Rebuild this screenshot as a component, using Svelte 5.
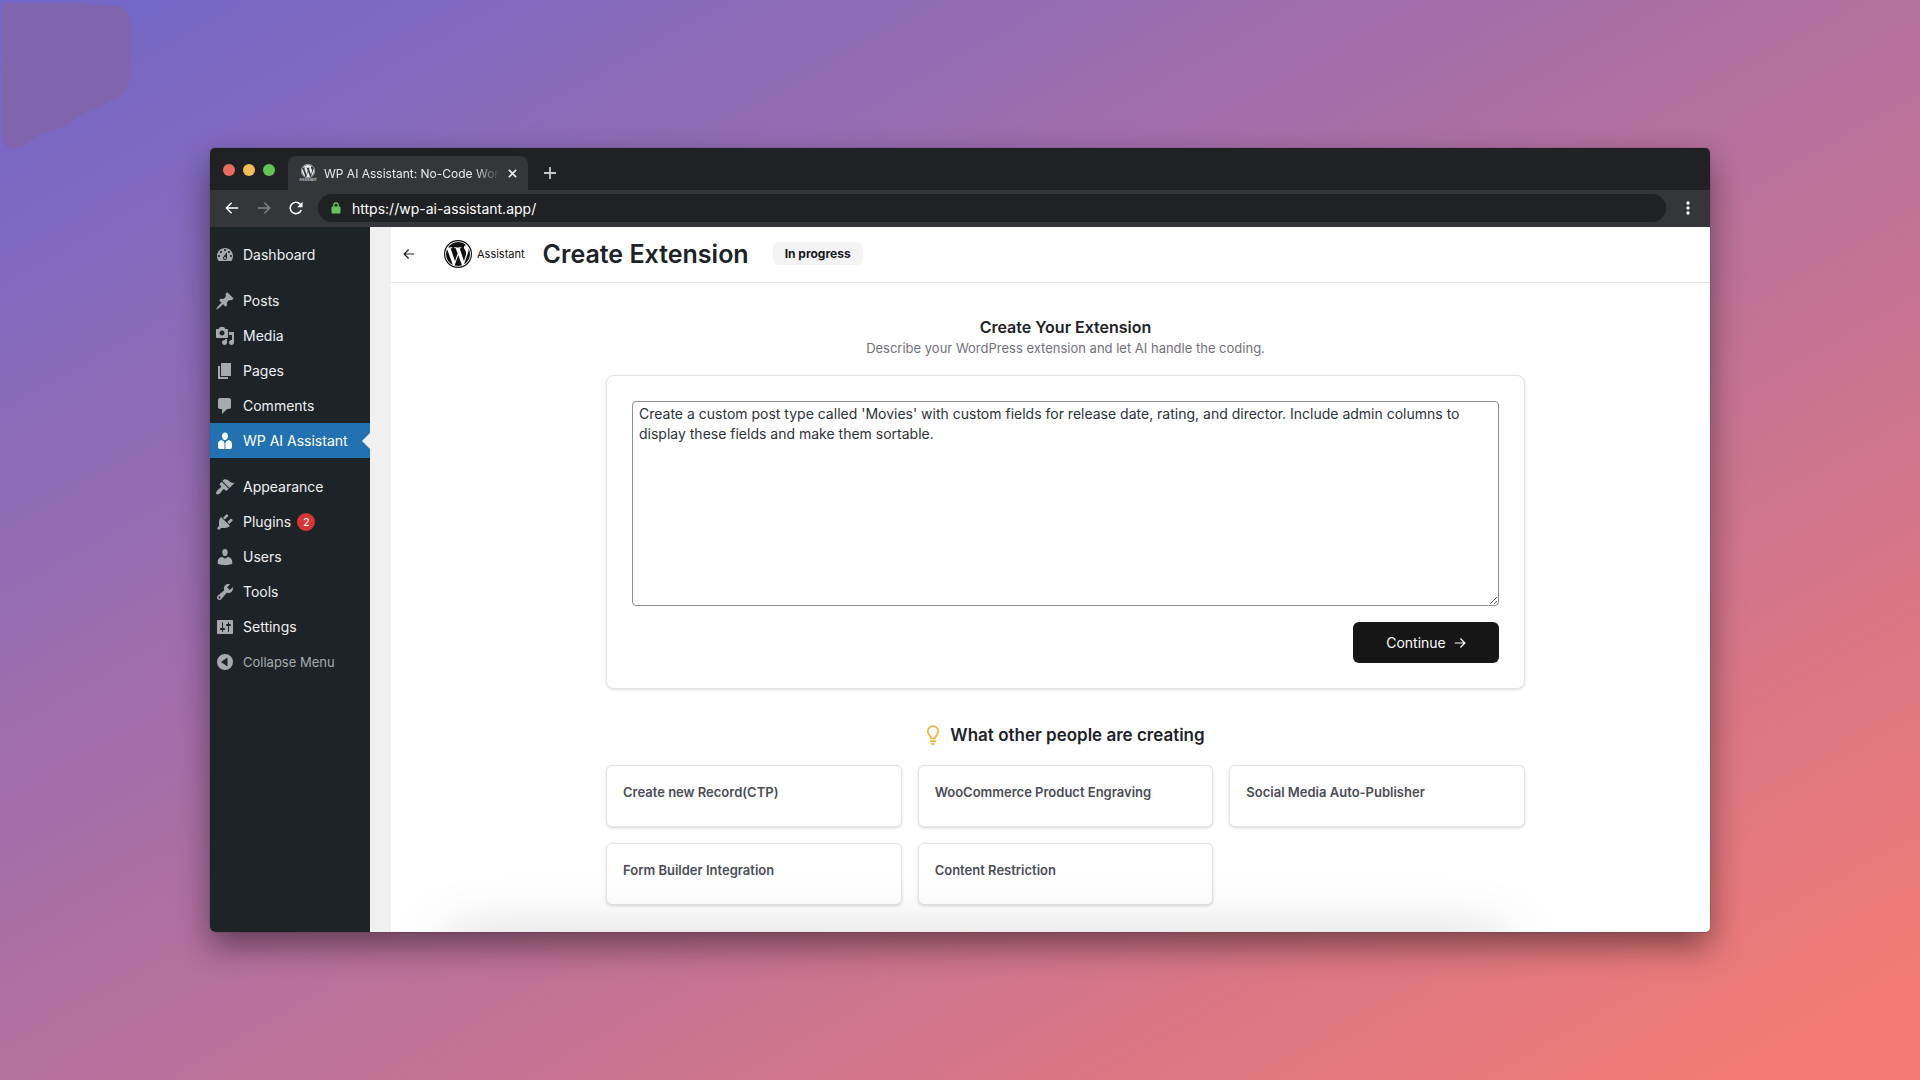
<script lang="ts">
    type MenuItem = { name: string; icon: string; active?: boolean; gap?: boolean; badge?: number };

    const menu: MenuItem[] = [
        { name: 'Dashboard', icon: 'M3.76 16h12.48c1.1-1.37 1.76-3.11 1.76-5 0-4.42-3.58-8-8-8s-8 3.58-8 8c0 1.89.66 3.63 1.76 5zM10 4c.55 0 1 .45 1 1s-.45 1-1 1-1-.45-1-1 .45-1 1-1zM6 6c.55 0 1 .45 1 1s-.45 1-1 1-1-.45-1-1 .45-1 1-1zm8 0c.55 0 1 .45 1 1s-.45 1-1 1-1-.45-1-1 .45-1 1-1zm-5.37 5.55L12 7v6c0 1.1-.9 2-2 2s-2-.9-2-2c0-.57.24-1.08.63-1.45zM4 10c.55 0 1 .45 1 1s-.45 1-1 1-1-.45-1-1 .45-1 1-1zm12 0c.55 0 1 .45 1 1s-.45 1-1 1-1-.45-1-1 .45-1 1-1zm-5 3c0-.55-.45-1-1-1s-1 .45-1 1 .45 1 1 1 1-.45 1-1z' },
        { name: 'Posts', gap: true, icon: 'M10.44 3.02l1.82-1.82 6.36 6.35-1.83 1.82c-1.05-.68-2.48-.57-3.41.36l-.75.75c-.92.93-1.04 2.35-.35 3.41l-1.83 1.82-2.41-2.41-2.8 2.79c-.42.42-3.38 2.71-3.8 2.29s1.86-3.39 2.28-3.81l2.79-2.79L4.1 9.36l1.83-1.82c1.05.69 2.48.57 3.4-.36l.75-.75c.93-.92 1.05-2.35.36-3.41z' },
        { name: 'Media', icon: 'M13 11V4c0-.55-.45-1-1-1h-1.67L9 1H5L3.67 3H2c-.55 0-1 .45-1 1v7c0 .55.45 1 1 1h10c.55 0 1-.45 1-1zM7 4.5c1.38 0 2.5 1.12 2.5 2.5S8.38 9.5 7 9.5 4.5 8.38 4.5 7 5.62 4.5 7 4.5zM14 6h5v10.5c0 1.38-1.12 2.5-2.5 2.5S14 17.88 14 16.5s1.12-2.5 2.5-2.5c.17 0 .34.02.5.05V9h-3V6zm-4 8.05V13h2v3.5c0 1.38-1.12 2.5-2.5 2.5S7 17.88 7 16.5 8.12 14 9.5 14c.17 0 .34.02.5.05z' },
        { name: 'Pages', icon: 'M6 15V2h10v13H6zm-1 1h8v2H3V5h2v11z' },
        { name: 'Comments', icon: 'M5 2h9c1.1 0 2 .9 2 2v7c0 1.1-.9 2-2 2h-2l-5 5v-5H5c-1.1 0-2-.9-2-2V4c0-1.1.9-2 2-2z' },
        { name: 'WP AI Assistant', active: true, icon: 'M10 1.5c2 0 3 1.6 3 3.6s-1.2 4-3 4-3-2-3-4 1-3.600 3-3.600zM6.500 9L9 10.500l.6 2L9 18H5q-2 0-2-2v-3c0-2.200 1.500-3.800 3.500-4zM13.500 9c2 .2 3.500 1.800 3.500 4v3q0 2-2 2h-4l-.6-5.500.6-2zM10 13l.5 5h-1z' },
        { name: 'Appearance', gap: true, icon: 'M14.48 11.06L7.41 3.99l1.5-1.5c.5-.56 2.3-.47 3.51.32 1.21.8 1.43 1.28 2.91 2.1 1.18.64 2.45 1.26 4.45.85zm-.71.71L6.7 4.7 4.93 6.47c-.39.39-.39 1.02 0 1.41l1.06 1.06c.39.39.39 1.03 0 1.42-.6.6-1.43 1.11-2.21 1.69-.35.26-.7.53-1.01.84C1.43 14.23.4 16.08 1.4 17.07c.99 1 2.84-.03 4.18-1.36.31-.31.58-.66.85-1.02.57-.78 1.08-1.61 1.69-2.21.39-.39 1.02-.39 1.41 0l1.06 1.06c.39.39 1.02.39 1.41 0z' },
        { name: 'Plugins', badge: 2, icon: 'M13.11 4.36L9.87 7.6 8 5.73l3.24-3.24c.35-.34 1.05-.2 1.56.32.52.51.66 1.21.31 1.55zm-8 1.77l.91-1.12 9.01 9.01-1.19.84c-.71.71-2.63 1.16-3.82 1.16H6.14L4.9 17.26c-.59.59-1.54.59-2.12 0-.59-.58-.59-1.53 0-2.12l1.24-1.24v-3.88c0-1.13.4-3.19 1.09-3.89zm7.26 3.97l3.24-3.24c.34-.35 1.04-.21 1.55.31.52.51.66 1.21.31 1.55l-3.24 3.25z' },
        { name: 'Users', icon: 'M10 9.25c-2.27 0-2.73-3.44-2.73-3.44C7 4.02 7.82 2 9.97 2c2.16 0 2.98 2.02 2.71 3.81 0 0-.41 3.44-2.68 3.44zm0 2.57L12.72 10c2.39 0 4.52 2.33 4.52 4.53v2.49s-3.65 1.13-7.24 1.13c-3.65 0-7.24-1.13-7.24-1.13v-2.49c0-2.25 1.94-4.48 4.47-4.48z' },
        { name: 'Tools', icon: 'M16.68 9.77c-1.34 1.34-3.3 1.67-4.95.99l-5.41 6.52c-.99.99-2.59.99-3.58 0s-.99-2.59 0-3.57l6.52-5.42c-.68-1.65-.35-3.61.99-4.95 1.28-1.28 3.12-1.62 4.72-1.06l-2.89 2.89 2.82 2.82 2.86-2.87c.53 1.58.18 3.39-1.08 4.65zM3.81 16.21c.4.39 1.04.39 1.43 0 .4-.4.4-1.04 0-1.43-.39-.4-1.03-.4-1.43 0-.39.39-.39 1.03 0 1.43z' },
        { name: 'Settings', icon: 'M18 16V4c0-.55-.45-1-1-1H3c-.55 0-1 .45-1 1v12c0 .55.45 1 1 1h14c.55 0 1-.45 1-1zM8 11h1c.55 0 1 .45 1 1s-.45 1-1 1H8v1.5c0 .28-.22.5-.5.5s-.5-.22-.5-.5V13H6c-.55 0-1-.45-1-1s.45-1 1-1h1V5.5c0-.28.22-.5.5-.5s.5.22.5.5V11zm5-2h-1c-.55 0-1-.45-1-1s.45-1 1-1h1V5.5c0-.28.22-.5.5-.5s.5.22.5.5V7h1c.55 0 1 .45 1 1s-.45 1-1 1h-1v5.5c0 .28-.22.5-.5.5s-.5-.22-.5-.5V9z' }
    ];

    const ideas = [
        'Create new Record(CTP)',
        'WooCommerce Product Engraving',
        'Social Media Auto-Publisher',
        'Form Builder Integration',
        'Content Restriction'
    ];

    let url = 'https://wp-ai-assistant.app/';
    let prompt = "Create a custom post type called 'Movies' with custom fields for release date, rating, and director. Include admin columns to display these fields and make them sortable.";
</script>

{#snippet wpLogo()}
    <svg class="wp" viewBox="0 0 24 24" aria-hidden="true">
        <circle cx="12" cy="12" r="11.5" fill="none" stroke="currentColor" />
        <path transform="translate(.6 .6) scale(.95)" fill="currentColor" d="M21.469 6.825c.84 1.537 1.318 3.3 1.318 5.175 0 3.979-2.156 7.456-5.363 9.325l3.295-9.527c.615-1.54.82-2.771.82-3.864 0-.405-.026-.78-.07-1.11m-7.981.105c.647-.03 1.232-.105 1.232-.105.582-.075.514-.93-.067-.899 0 0-1.755.135-2.88.135-1.064 0-2.85-.15-2.85-.15-.585-.03-.661.855-.075.885 0 0 .54.061 1.125.09l1.68 4.605-2.37 7.08L5.354 6.9c.649-.03 1.234-.1 1.234-.1.585-.075.516-.93-.065-.896 0 0-1.746.138-2.874.138-.2 0-.438-.008-.69-.015C4.911 3.15 8.235 1.215 12 1.215c2.809 0 5.365 1.072 7.286 2.833-.046-.003-.091-.009-.141-.009-1.06 0-1.812.923-1.812 1.914 0 .89.513 1.643 1.06 2.531.411.72.89 1.643.89 2.977 0 .915-.354 1.994-.821 3.479l-1.075 3.585-3.9-11.61.001.014zM12 22.784c-1.059 0-2.081-.153-3.048-.437l3.237-9.406 3.315 9.087c.024.053.05.101.078.149-1.12.393-2.325.609-3.582.609M1.211 12c0-1.564.336-3.05.935-4.39L7.29 21.709C3.694 19.96 1.212 16.271 1.211 12" />
    </svg>
{/snippet}

{#snippet arrow(left: boolean)}
    <svg class="arrow" class:left viewBox="0 0 16 16" aria-hidden="true">
        <path d="M1 8h13.500M8.500 2L14.500 8l-6 6" fill="none" stroke="currentColor" stroke-width="1.600" />
    </svg>
{/snippet}

<div class="desktop">
    <svg class="blob" viewBox="0 0 131 149" aria-hidden="true">
        <path d="M2 3H80L122 7Q131 12 131 32V72Q130 88 119 97L78 116L68 125L38 135L26 145L12 149Q2 146 2 136Z" />
    </svg>

    <div class="window">
        <div class="tabs">
            <div class="lights"><i></i><i></i><i></i></div>
            <div class="tab">
                <span class="favicon">{@render wpLogo()}<small>Assistant</small></span>
                <span class="tab-title">WP AI Assistant: No-Code Word</span>
                <button class="close" aria-label="Close tab">
                    <svg viewBox="0 0 10 10"><path d="M1 1l8 8M9 1L1 9" stroke="currentColor" stroke-width="1.800" /></svg>
                </button>
            </div>
            <button class="new-tab" aria-label="New tab">
                <svg viewBox="0 0 12 12"><path d="M6 0v12M0 6h12" stroke="currentColor" stroke-width="1.800" /></svg>
            </button>
        </div>

        <div class="toolbar">
            <button aria-label="Back">{@render arrow(true)}</button>
            <button class="dim" aria-label="Forward">{@render arrow(false)}</button>
            <button aria-label="Reload">
                <svg class="arrow" viewBox="0 0 16 16">
                    <path d="M14 10.200A6.500 6.500 0 1 1 12.600 3.400L14 5" fill="none" stroke="currentColor" stroke-width="1.800" />
                    <path d="M15.500.8V7H9.300z" fill="currentColor" />
                </svg>
            </button>
            <label class="address">
                <svg viewBox="0 0 10 12" aria-hidden="true">
                    <path d="M1 5h8v6H1z" fill="#61c554" stroke="#61c554" />
                    <path d="M2.700 5V3.300a2.300 2.300 0 0 1 4.600 0V5" fill="none" stroke="#61c554" stroke-width="1.300" />
                </svg>
                <input type="text" aria-label="Address" bind:value={url} />
            </label>
            <button class="more" aria-label="Menu">
                <svg viewBox="0 0 4 14"><circle cx="2" cy="2" r="1.700" /><circle cx="2" cy="7" r="1.700" /><circle cx="2" cy="12" r="1.700" /></svg>
            </button>
        </div>

        <div class="page">
            <nav>
                {#each menu as item}
                    <a href="#{item.name}" class:active={item.active} class:gap={item.gap}>
                        <svg viewBox="0 0 20 20" aria-hidden="true"><path fill-rule="evenodd" d={item.icon} /></svg>
                        {item.name}
                        {#if item.badge}<span class="badge">{item.badge}</span>{/if}
                    </a>
                {/each}
                <button class="collapse">
                    <svg viewBox="0 0 20 20" aria-hidden="true">
                        <path fill-rule="evenodd" d="M10 2a8 8 0 1 1 0 16a8 8 0 0 1 0-16zM12.500 5.500L6 10l6.500 4.500z" />
                    </svg>
                    Collapse Menu
                </button>
            </nav>

            <main>
                <header>
                    <button class="back" aria-label="Go back">{@render arrow(true)}</button>
                    <span class="brand">{@render wpLogo()}Assistant</span>
                    <h1>Create Extension</h1>
                    <span class="status">In progress</span>
                </header>

                <div class="content">
                    <div class="intro">
                        <h2>Create Your Extension</h2>
                        <p>Describe your WordPress extension and let AI handle the coding.</p>
                    </div>

                    <form class="card" on:submit|preventDefault>
                        <textarea aria-label="Extension description" spellcheck="false" bind:value={prompt}></textarea>
                        <button class="continue">Continue {@render arrow(false)}</button>
                    </form>

                    <h3>
                        <svg viewBox="0 0 14 20" aria-hidden="true">
                            <path d="M5 13.500c0-2.500-3.200-3.500-3.200-7.200a5.200 5.200 0 0 1 10.400 0c0 3.700-3.200 4.700-3.200 7.200z" fill="none" stroke="#f2b43c" stroke-width="1.700" />
                            <path d="M4 16.200h6M5 19h4" stroke="#f2b43c" stroke-width="1.700" />
                        </svg>
                        What other people are creating
                    </h3>
                    <div class="ideas">
                        {#each ideas as idea}
                            <button>{idea}</button>
                        {/each}
                    </div>
                </div>
            </main>
        </div>
    </div>
</div>

<style>
    :global(body) {
        margin: 0;
    }

    .desktop {
        position: relative;
        box-sizing: border-box;
        min-height: 100vh;
        padding: 148px 210px;
        display: flex;
        background: linear-gradient(to bottom right, #7067ca, #b4709f 50%, #f37b74 96%);
        font-family: Inter, 'Liberation Sans', sans-serif;
        font-size: 14px;
        color: #1d2327;
    }

    button {
        padding: 0;
        border: none;
        background: none;
        font: inherit;
        color: inherit;
        cursor: pointer;
    }

    svg {
        display: block;
        flex: none;
    }

    .blob {
        position: absolute;
        top: 0;
        left: 0;
        width: 131px;
        fill: #8064ae;
    }

    .window {
        flex: 1;
        min-width: 0;
        display: flex;
        flex-direction: column;
        border-radius: 5px;
        overflow: hidden;
        box-shadow: 0 0 1px rgba(0, 0, 0, 0.6), 0 14px 32px rgba(0, 0, 0, 0.45);
    }

    .tabs {
        display: flex;
        height: 42px;
        background: #202124;
        color: #e8eaed;
    }

    .lights {
        display: flex;
        gap: 8px;
        padding: 16px 13px 0;
    }

    .lights i {
        width: 12px;
        height: 12px;
        border-radius: 50%;
        background: #ed6a5e;
    }

    .lights i:nth-child(2) {
        background: #f5bf4f;
    }

    .lights i:nth-child(3) {
        background: #61c554;
    }

    .tab {
        box-sizing: border-box;
        width: 240px;
        margin-top: 8px;
        padding: 0 11px 0;
        display: flex;
        align-items: center;
        border-radius: 8px 8px 0 0;
        background: #35363a;
        font-size: 12px;
    }

    .favicon {
        width: 18px;
        margin-right: 7px;
        display: flex;
        flex-direction: column;
        align-items: center;
    }

    .favicon .wp {
        width: 14px;
    }

    .favicon small {
        font-size: 4px;
        line-height: 4px;
    }

    .tab-title {
        flex: 1;
        min-width: 0;
        white-space: nowrap;
        overflow: hidden;
        mask-image: linear-gradient(to right, #000 85%, transparent);
    }

    .close {
        margin-left: 8px;
    }

    .close svg {
        width: 9px;
    }

    .new-tab {
        margin: 8px 0 0 16px;
        color: #c8c9cc;
    }

    .new-tab svg {
        width: 12px;
    }

    .toolbar {
        box-sizing: border-box;
        height: 37px;
        padding: 0 20px 1px 15px;
        display: flex;
        align-items: center;
        gap: 18px;
        background: #35363a;
        color: #fff;
    }

    .toolbar .arrow {
        width: 14px;
    }

    .toolbar .dim {
        color: #86878b;
    }

    .address {
        flex: 1;
        height: 28px;
        margin: 0 2px 0 -3px;
        padding-left: 13px;
        display: flex;
        align-items: center;
        gap: 11px;
        border-radius: 14px;
        background: #202124;
    }

    .address svg {
        width: 10px;
    }

    .address input {
        flex: 1;
        border: none;
        padding: 0;
        outline: none;
        background: none;
        font: inherit;
        color: #fff;
    }

    .more svg {
        width: 4px;
        fill: #fff;
    }

    .page {
        flex: 1;
        display: flex;
        background: #f0f0f1;
    }

    nav {
        width: 160px;
        padding-top: 10px;
        background: #1d2327;
    }

    nav a,
    .collapse {
        position: relative;
        box-sizing: border-box;
        width: 100%;
        height: 35px;
        padding-left: 5px;
        display: flex;
        align-items: center;
        gap: 8px;
        color: #f0f0f1;
        text-decoration: none;
    }

    nav svg {
        width: 20px;
        fill: #a7aaad;
    }

    nav .gap {
        margin-top: 11px;
    }

    nav .active {
        background: #2271b1;
        color: #fff;
    }

    nav .active svg {
        fill: #fff;
    }

    nav .active::after {
        content: '';
        position: absolute;
        right: 0;
        border: 8px solid transparent;
        border-right-color: #f0f0f1;
    }

    .badge {
        min-width: 18px;
        margin-left: -2px;
        border-radius: 9px;
        background: #d63638;
        color: #fff;
        font-size: 11px;
        line-height: 18px;
        text-align: center;
    }

    .collapse {
        font-size: 13px;
        color: #a7aaad;
    }

    main {
        position: relative;
        flex: 1;
        margin-left: 21px;
        overflow: hidden;
        background: #fff;
    }

    /* shade rising from the bottom edge */
    main::after {
        content: '';
        position: absolute;
        top: 100%;
        left: 56px;
        right: 206px;
        height: 100px;
        box-shadow: 0 4px 60px rgba(0, 0, 0, 0.17);
        pointer-events: none;
    }

    header {
        box-sizing: border-box;
        height: 56px;
        padding: 0 0 2px 12px;
        display: flex;
        align-items: center;
        border-bottom: 1px solid #e5e5e5;
    }

    .back .arrow {
        width: 12px;
    }

    .brand {
        margin: 0 18px 0 29px;
        display: flex;
        align-items: center;
        gap: 5px;
        font-size: 11px;
        color: #111;
    }

    .brand .wp {
        width: 28px;
    }

    .left {
        transform: scaleX(-1);
    }

    h1,
    h2,
    h3,
    p {
        margin: 0;
        font-weight: 600;
    }

    h1 {
        font-size: 25px;
    }

    .status {
        margin-left: 24px;
        padding: 0 12px;
        border-radius: 6px;
        background: #f4f4f5;
        color: #18181b;
        font-size: 12px;
        font-weight: 700;
        line-height: 23px;
    }

    .content {
        max-width: 919px;
        margin: 0 auto;
        padding: 32px 0 26px 30px;
    }

    .intro {
        text-align: center;
        margin-bottom: 17px;
    }

    h2 {
        font-size: 16px;
        line-height: 24px;
    }

    p {
        font-size: 13px;
        font-weight: 400;
        line-height: 19px;
        color: #71717a;
    }

    .card {
        padding: 25px;
        display: flex;
        flex-direction: column;
        border: 1px solid #e4e4e7;
        border-radius: 8px;
        background: #fff;
        box-shadow: 0 1px 3px rgba(0, 0, 0, 0.12);
    }

    textarea {
        box-sizing: border-box;
        height: 205px;
        padding: 2px 6px;
        border: 1px solid #8c8f94;
        border-radius: 4px;
        outline: none;
        background: #fff;
        font: inherit;
        line-height: 20px;
        color: #2c3338;
    }

    .continue {
        align-self: flex-end;
        width: 146px;
        height: 41px;
        margin-top: 16px;
        display: flex;
        align-items: center;
        justify-content: center;
        gap: 8px;
        border-radius: 6px;
        background: #161616;
        color: #fff;
    }

    .continue .arrow {
        width: 12px;
    }

    h3 {
        margin: 34px 0 18px;
        display: flex;
        justify-content: center;
        align-items: center;
        gap: 10px;
        font-size: 17px;
        line-height: 24px;
    }

    h3 svg {
        width: 14px;
    }

    .ideas {
        display: grid;
        grid-template-columns: repeat(3, 1fr);
        gap: 16px;
    }

    .ideas button {
        height: 62px;
        padding: 0 16px 8px;
        border: 1px solid #e4e4e7;
        border-radius: 6px;
        background: #fff;
        box-shadow: 0 1px 3px rgba(0, 0, 0, 0.16);
        font-size: 13px;
        font-weight: 600;
        text-align: left;
        color: #4b4d54;
    }
</style>
